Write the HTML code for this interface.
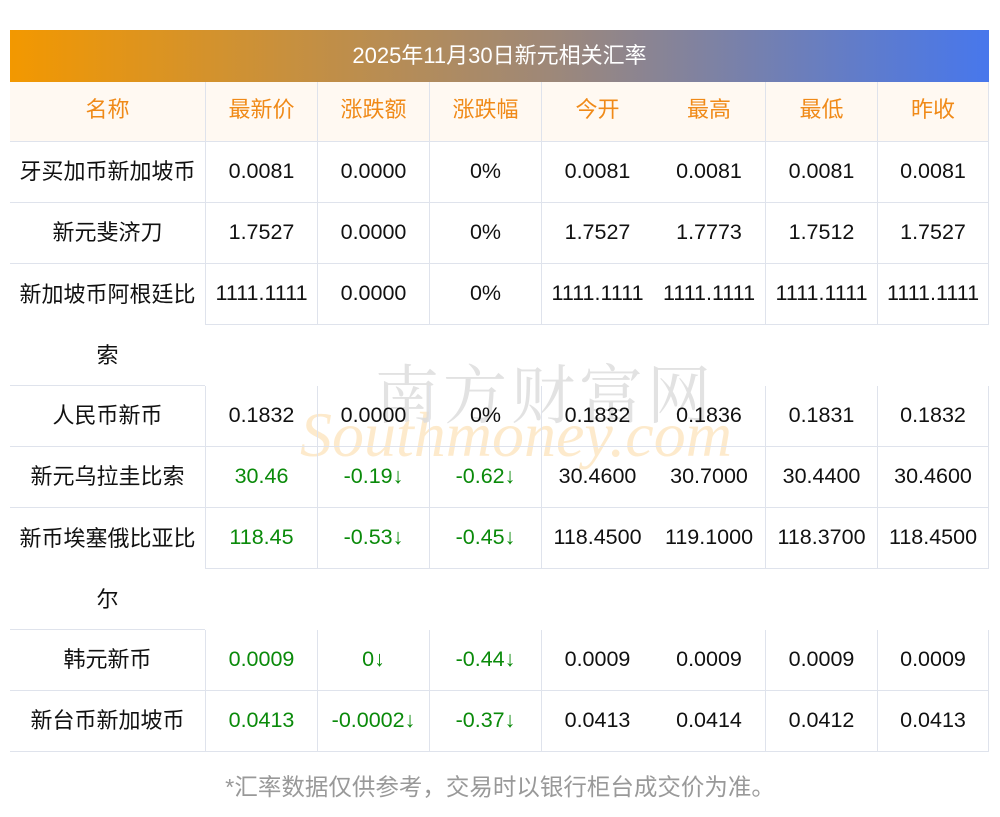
<!DOCTYPE html>
<html><head><meta charset="utf-8">
<style>
*{margin:0;padding:0;box-sizing:border-box}
body{width:1000px;height:817px;background:#fff;font-family:"Liberation Sans","Noto Sans CJK SC",sans-serif;position:relative;overflow:hidden}
.title{position:absolute;left:10px;top:30px;width:979px;height:52px;background:linear-gradient(90deg,#f39800,#9e8878 55%,#4777ec);color:#fff;font-size:22px;text-align:center;line-height:52px}
.tbl{position:absolute;left:10px;top:82px;width:979px}
.row{display:flex;position:relative}
.c{height:61px;line-height:59px;text-align:center;font-size:21.5px;color:#111;border-bottom:1px solid #dfe3ec;border-left:1px solid #dfe3ec;white-space:nowrap}
.c:first-child{border-left:none;width:195px;font-size:22px}
.c:not(:first-child){width:112px}
.c:last-child{border-right:1px solid #dfe3ec}
.nl{border-left:none!important}
.hd .c{background:#fff9f2;color:#f08a18;height:60px;line-height:56px;font-size:22px}
.g{color:#0a8a0a}
.dbl .c:first-child{height:122px;line-height:61px;padding-top:0}
.dbl .c{align-self:flex-start}
.note{position:absolute;top:768px;left:0;width:1000px;text-align:center;color:#999;font-size:23.5px}
.wm1{position:absolute;left:375px;top:345px;font-size:64px;color:#ddd;letter-spacing:4px;opacity:.85;font-family:"Noto Serif CJK SC",serif}
.wm2{position:absolute;left:300px;top:398px;font-size:64px;color:#fde6c0;font-style:italic;font-family:"Liberation Serif",serif;opacity:.8}
</style></head><body>
<div class="wm2">Southmoney.com</div>
<div class="wm1">南方财富网</div>
<div class="title">2025年11月30日新元相关汇率</div>
<div class="tbl">
<div class="row hd"><div class="c">名称</div><div class="c">最新价</div><div class="c">涨跌额</div><div class="c">涨跌幅</div><div class="c">今开</div><div class="c nl">最高</div><div class="c">最低</div><div class="c">昨收</div></div>
<div class="row"><div class="c">牙买加币新加坡币</div><div class="c">0.0081</div><div class="c">0.0000</div><div class="c">0%</div><div class="c">0.0081</div><div class="c nl">0.0081</div><div class="c">0.0081</div><div class="c">0.0081</div></div>
<div class="row"><div class="c">新元斐济刀</div><div class="c">1.7527</div><div class="c">0.0000</div><div class="c">0%</div><div class="c">1.7527</div><div class="c nl">1.7773</div><div class="c">1.7512</div><div class="c">1.7527</div></div>
<div class="row dbl"><div class="c">新加坡币阿根廷比<br>索</div><div class="c">1111.1111</div><div class="c">0.0000</div><div class="c">0%</div><div class="c">1111.1111</div><div class="c nl">1111.1111</div><div class="c">1111.1111</div><div class="c">1111.1111</div></div>
<div class="row"><div class="c">人民币新币</div><div class="c">0.1832</div><div class="c">0.0000</div><div class="c">0%</div><div class="c">0.1832</div><div class="c nl">0.1836</div><div class="c">0.1831</div><div class="c">0.1832</div></div>
<div class="row"><div class="c">新元乌拉圭比索</div><div class="c g">30.46</div><div class="c g">-0.19↓</div><div class="c g">-0.62↓</div><div class="c">30.4600</div><div class="c nl">30.7000</div><div class="c">30.4400</div><div class="c">30.4600</div></div>
<div class="row dbl"><div class="c">新币埃塞俄比亚比<br>尔</div><div class="c g">118.45</div><div class="c g">-0.53↓</div><div class="c g">-0.45↓</div><div class="c">118.4500</div><div class="c nl">119.1000</div><div class="c">118.3700</div><div class="c">118.4500</div></div>
<div class="row"><div class="c">韩元新币</div><div class="c g">0.0009</div><div class="c g">0↓</div><div class="c g">-0.44↓</div><div class="c">0.0009</div><div class="c nl">0.0009</div><div class="c">0.0009</div><div class="c">0.0009</div></div>
<div class="row"><div class="c">新台币新加坡币</div><div class="c g">0.0413</div><div class="c g">-0.0002↓</div><div class="c g">-0.37↓</div><div class="c">0.0413</div><div class="c nl">0.0414</div><div class="c">0.0412</div><div class="c">0.0413</div></div>
</div>
<div class="note">*汇率数据仅供参考，交易时以银行柜台成交价为准。</div>
</body></html>
